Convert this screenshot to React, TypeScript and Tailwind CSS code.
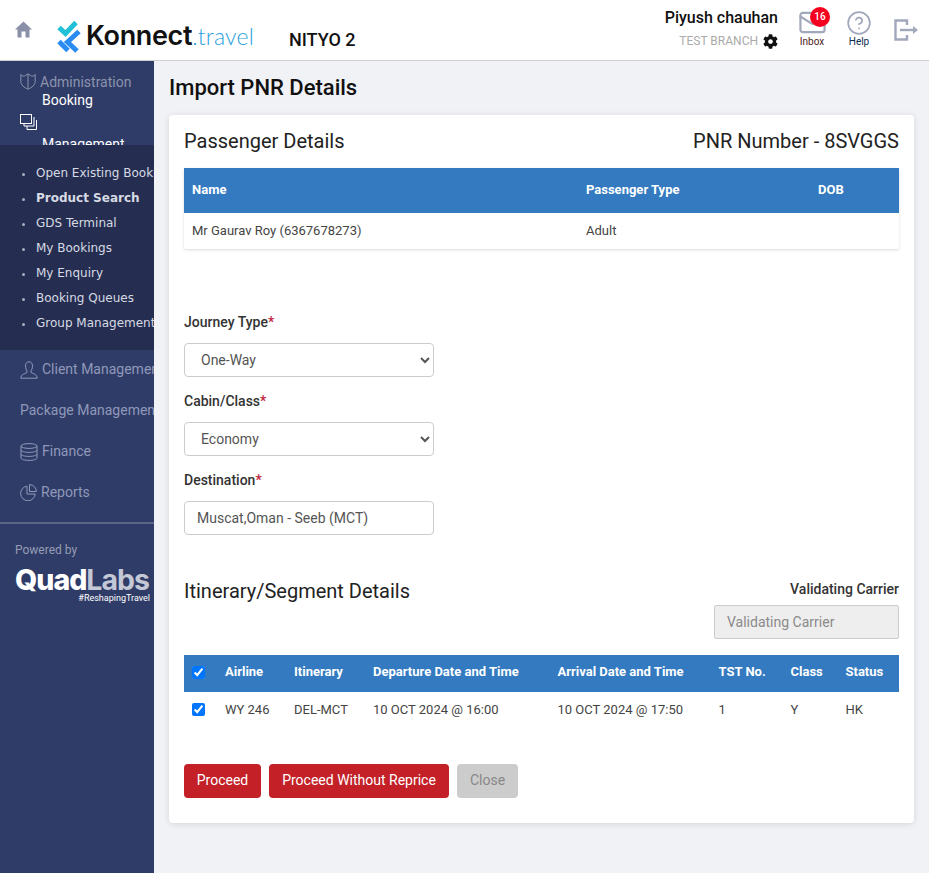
import React from 'react';
import { Mail, CircleHelp } from 'lucide-react';
import { FaCog } from 'react-icons/fa';

const subMenu = ['Open Existing Booking', 'Product Search', 'GDS Terminal', 'My Bookings', 'My Enquiry', 'Booking Queues', 'Group Management'];

const Sidebar: React.FC = () => (
  <aside className="w-[154px] shrink-0 bg-[#303c68] overflow-hidden flex flex-col">
    <div className="h-[84px] shrink-0 overflow-hidden pl-[20px] pt-[12px] text-[14px] leading-[16px]">
      <div className="flex items-center gap-[4px] text-[#8b93ad]">
        <svg className="shrink-0" width="16" height="17" viewBox="0 0 16 17" fill="none" stroke="#8b93ad" strokeWidth="1">
          <path d="M0.8 1.5 C2.5 3.5 4 3.5 5.3 2.5 L8 0.8 L10.7 2.5 C12 3.5 13.5 3.5 15.2 1.5 V8 C15.2 12 12 14.5 8 16.2 C4 14.5 0.8 12 0.8 8Z" />
          <path d="M8 1 V16" />
        </svg>
        <span>Administration</span>
      </div>
      <div className="flex text-white mt-[1px]">
        <svg className="shrink-0 mt-[23px]" width="17" height="16" viewBox="0 0 17 16" fill="none" stroke="#ffffff" strokeWidth="1">
          <rect x="0.5" y="0.5" width="11" height="9" />
          <path d="M14 3 V12 H4 V10" />
          <path d="M16.5 6 V15.5 H7 V12" />
        </svg>
        <span className="w-[100px] ml-[5px] leading-[44px] -mt-[13px]">Booking Management</span>
      </div>
    </div>
    <ul className="bg-[#252e50] h-[205px] shrink-0 pt-[16px] pl-[22px] font-['DejaVu_Sans',sans-serif] text-[12px] text-[#d7dae4] whitespace-nowrap">
      {subMenu.map((item) => (
        <li key={item} className="h-[25px] leading-[25px] flex items-center">
          <span className="h-[3px] w-[3px] shrink-0 rounded-full bg-[#a9aebf] mr-[11px] mt-[2px]" />
          <span className={item === 'Product Search' ? 'font-bold' : ''}>{item}</span>
        </li>
      ))}
    </ul>
    <nav className="text-[14px] text-[#8f98b8] whitespace-nowrap pl-[20px] h-[174px] shrink-0 border-b-2 border-[#5c6586]">
      <div className="h-[41px] -mt-[1px] flex items-center gap-[4px]">
        <svg className="shrink-0" width="18" height="18" viewBox="0 0 18 18" fill="none" stroke="#8f98b8" strokeWidth="1">
          <path d="M9 0.8 C6.5 0.8 5.5 2.8 5.5 5 C5.5 7.5 6.5 9 7 10 V11.5 C5 12.8 1 13 0.8 17.2 H17.2 C17 13 13 12.8 11 11.5 V10 C11.5 9 12.5 7.5 12.5 5 C12.5 2.8 11.5 0.8 9 0.8Z" />
        </svg>
        <span>Client Management</span>
      </div>
      <div className="h-[41px] flex items-center">Package Management</div>
      <div className="h-[41px] flex items-center gap-[4px]">
        <svg className="shrink-0" width="18" height="18" viewBox="0 0 18 18" fill="none" stroke="#8f98b8" strokeWidth="1">
          <ellipse cx="9" cy="3" rx="8" ry="2.4" />
          <path d="M1 3 V15 C1 16.4 4.6 17.4 9 17.4 C13.4 17.4 17 16.4 17 15 V3" />
          <path d="M1 7 C1 8.4 4.6 9.4 9 9.4 C13.4 9.4 17 8.4 17 7" />
          <path d="M1 11 C1 12.4 4.6 13.4 9 13.4 C13.4 13.4 17 12.4 17 11" />
        </svg>
        <span>Finance</span>
      </div>
      <div className="h-[41px] flex items-center gap-[4px]">
        <svg className="shrink-0" width="17" height="17" viewBox="0 0 17 17" fill="none" stroke="#8f98b8" strokeWidth="1">
          <path d="M7 2.2 A7.3 7.3 0 1 0 15.2 10 H7Z" />
          <path d="M9.5 0.6 A7 7 0 0 1 16.4 7.5 H9.5Z" />
        </svg>
        <span>Reports</span>
      </div>
    </nav>
    <div className="pl-[15px] pt-[18px] text-[12px] leading-[16px] text-[#959cb4]">Powered by</div>
    <div className="pl-[15px] pt-[8px] leading-none whitespace-nowrap">
      <div className="text-[28.5px] font-['Inter',sans-serif] font-extrabold tracking-[-1px] leading-[28px] w-[135px]">
        <span className="text-white">Quad</span>
        <span className="text-[#c4c8d6] font-bold">Labs</span>
      </div>
      <div className="w-[135px] text-right text-[9px] leading-[9px] text-white">#ReshapingTravel</div>
    </div>
  </aside>
);

const Header: React.FC = () => (
  <header className="h-[61px] shrink-0 bg-white border-b border-[#cfcfd2] flex items-center relative">
    <svg className="ml-[15px] mb-[2px] shrink-0" width="17" height="17" viewBox="0 0 17 17">
      <path d="M8.5 0.5 L17 8.5 H14.5 V16.5 H10.5 V10.5 H6.5 V16.5 H2.5 V8.5 H0 Z" fill="#8a90a8" />
    </svg>
    <svg className="ml-[25px] mt-[13px] shrink-0" width="24" height="33" viewBox="0 0 24 33" fill="none" strokeWidth="5">
      <path d="M2 7.5 L8.5 13.5 L19 2.5" stroke="#22c0d6" />
      <path d="M22 11.5 L10.5 22 L20 31" stroke="#2a8bf2" />
      <path d="M2 21.5 L11 30.5" stroke="#2a8bf2" />
    </svg>
    <div className="ml-[5px] mt-[12px] flex items-baseline whitespace-nowrap">
      <span className="font-['Inter',sans-serif] font-semibold text-[27px] tracking-[-0.35px] text-[#111]">Konnect</span>
      <span className="font-['Lato',sans-serif] font-light text-[23px] text-[#2a9fe0] tracking-[0.2px]">.travel</span>
    </div>
    <div className="ml-[35px] mt-[18px] text-[18px] font-medium text-[#111] whitespace-nowrap">NITYO 2</div>

    <div className="ml-auto mr-[11px] flex items-start h-full">
      <div className="text-right mt-[9px]">
        <div className="text-[16px] font-medium leading-[18px] text-[#111]">Piyush chauhan</div>
        <div className="flex items-center justify-end gap-[5px] mt-[5px]">
          <span className="text-[12px] text-[#ababab]">TEST BRANCH</span>
          <FaCog className="h-[15px] w-[15px] text-[#111]" />
        </div>
      </div>
      <div className="relative w-[28px] ml-[20px] mt-[10px] flex flex-col items-center">
        <Mail className="h-[29px] w-[29px] text-[#a2a8bc] -mt-[2px]" strokeWidth={1.8} />
        <span className="absolute -top-[3px] left-[12px] h-[20px] w-[20px] rounded-full bg-[#f5001e] text-white text-[10px] font-medium leading-[20px] text-center">16</span>
        <span className="text-[10px] text-[#4a2222] leading-[12px] -mt-[1px]">Inbox</span>
      </div>
      <div className="w-[26px] ml-[20px] mt-[10px] flex flex-col items-center">
        <CircleHelp className="h-[26px] w-[26px] text-[#a2a8bc]" strokeWidth={1.6} />
        <span className="text-[10px] text-[#0c2d4e] leading-[12px]">Help</span>
      </div>
      <svg className="ml-[22px] mt-[19px]" width="24" height="22" viewBox="0 0 24 22" fill="none" stroke="#a2a8bc" strokeWidth="2.4">
        <path d="M13 6 V1.5 H1.5 V20.5 H13 V16" />
        <path d="M6 11 H19" />
        <path d="M19 7 L24 11 L19 15Z" fill="#a2a8bc" stroke="none" />
      </svg>
    </div>
  </header>
);

const Label: React.FC<{ text: string }> = ({ text }) => (
  <div className="text-[14px] font-medium leading-[18px] text-[#333]">
    {text}
    <span className="text-[#c0213a]">*</span>
  </div>
);

const Select: React.FC<{ value: string }> = ({ value }) => (
  <select
    defaultValue={value}
    className="block w-[250px] h-[34px] mt-[12px] pl-[12px] pr-[2px] bg-white border border-[#cccccc] rounded-[4px] text-[14px] text-[#555]"
  >
    <option>{value}</option>
  </select>
);

const headers = ['Airline', 'Itinerary', 'Departure Date and Time', 'Arrival Date and Time', 'TST No.', 'Class', 'Status'];
const cells = ['WY 246', 'DEL-MCT', '10 OCT 2024 @ 16:00', '10 OCT 2024 @ 17:50', '1', 'Y', 'HK'];
const GRID = 'grid grid-cols-[33px_69px_79px_184.5px_161px_72px_55px_1fr] items-center';

const App: React.FC = () => (
  <div className="h-[873px] w-[929px] overflow-hidden bg-[#f1f2f6] font-['Roboto',sans-serif] flex flex-col">
    <Header />
    <div className="flex flex-1 min-h-0">
      <Sidebar />
      <main className="flex-1 pl-[15px] pr-[15px]">
        <h1 className="text-[22px] font-medium leading-[28px] text-[#111] mt-[13px] mb-[13px]">Import PNR Details</h1>
        <section className="bg-white rounded-[4px] shadow-[0_1px_6px_rgba(0,0,0,0.12)] h-[708px] px-[15px]">
          <div className="flex justify-between items-center h-[53px] pb-[2px] text-[20px] leading-[24px] text-[#222]">
            <h2>Passenger Details</h2>
            <div>PNR Number - 8SVGGS</div>
          </div>
          <div className="shadow-[0_1px_3px_rgba(0,0,0,0.15)] rounded-[2px] text-[13px]">
            <div className="grid grid-cols-[394px_232px_1fr] h-[45px] items-center bg-[#337ac0] text-white font-bold pl-[8px] pb-[2px] text-[13px]">
              <span>Name</span>
              <span>Passenger Type</span>
              <span>DOB</span>
            </div>
            <div className="grid grid-cols-[394px_232px_1fr] h-[36px] items-center pl-[8px] text-[#444]">
              <span>Mr Gaurav Roy (6367678273)</span>
              <span>Adult</span>
              <span />
            </div>
          </div>

          <div className="pt-[64px]">
            <Label text="Journey Type" />
            <Select value="One-Way" />
            <div className="mt-[15px]"><Label text="Cabin/Class" /></div>
            <Select value="Economy" />
            <div className="mt-[15px]"><Label text="Destination" /></div>
            <input
              readOnly
              value="Muscat,Oman - Seeb (MCT)"
              className="block w-[250px] h-[34px] mt-[12px] px-[12px] bg-white border border-[#cccccc] rounded-[4px] text-[14px] text-[#555]"
            />
          </div>

          <div className="flex justify-between mt-[35px]">
            <h2 className="text-[20px] leading-[24px] text-[#222] mt-[9px]">Itinerary/Segment Details</h2>
            <div className="flex flex-col items-end">
              <div className="text-[14px] font-medium leading-[18px] text-[#333] mt-[10px]">Validating Carrier</div>
              <input
                readOnly
                placeholder="Validating Carrier"
                className="block w-[185px] h-[34px] mt-[7px] px-[12px] bg-[#eeeeee] border border-[#cccccc] rounded-[2px] text-[14px] placeholder:text-[#8a8a8a]"
              />
            </div>
          </div>

          <div className={`${GRID} mt-[16px] h-[37px] bg-[#337ac0] text-white font-bold text-[13px] whitespace-nowrap pl-[8px] pb-[3px]`}>
            <input type="checkbox" defaultChecked className="h-[13px] w-[13px] accent-[#0075ff]" />
            {headers.map((h) => (
              <span key={h}>{h}</span>
            ))}
          </div>
          <div className={`${GRID} h-[35px] text-[13px] text-[#444] whitespace-nowrap pl-[8px]`}>
            <input type="checkbox" defaultChecked className="h-[13px] w-[13px] accent-[#0075ff]" />
            {cells.map((c, i) => (
              <span key={i}>{c}</span>
            ))}
          </div>

          <div className="flex gap-[8px] mt-[37px]">
            <button className="h-[34px] w-[77px] pb-[2px] rounded-[4px] bg-[#c32027] text-white text-[14px]">Proceed</button>
            <button className="h-[34px] w-[180px] pb-[2px] rounded-[4px] bg-[#c32027] text-white text-[14px]">Proceed Without Reprice</button>
            <button className="h-[34px] w-[61px] pb-[2px] rounded-[4px] bg-[#cccccc] text-[#888] text-[14px]">Close</button>
          </div>
        </section>
      </main>
    </div>
  </div>
);

export default App;
